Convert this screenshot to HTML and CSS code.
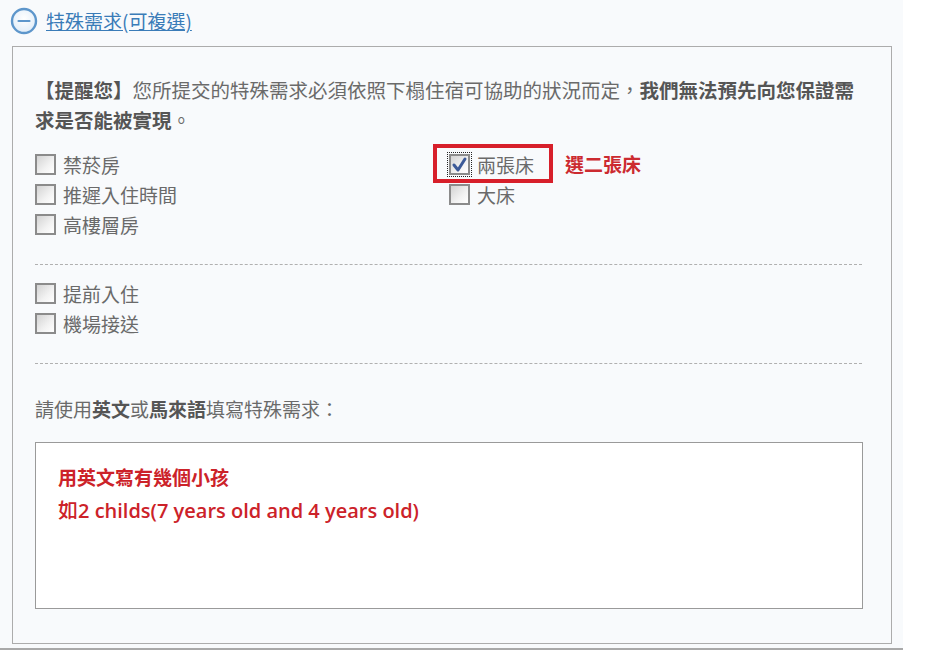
FILE: index.html
```html
<!DOCTYPE html>
<html lang="zh-Hant">
<head>
  <meta charset="UTF-8">
  <title>特殊需求</title>
  <link rel="stylesheet" href="styles.css">
</head>
<body>

<div class="page">
  <div class="toggle">
    <svg class="toggle-icon" width="28" height="28" viewBox="0 0 28 28">
      <defs>
        <radialGradient id="g" cx="50%" cy="40%" r="60%">
          <stop offset="0%" stop-color="#ffffff"/>
          <stop offset="100%" stop-color="#e1edf8"/>
        </radialGradient>
      </defs>
      <circle cx="14" cy="14" r="12" fill="url(#g)" stroke="#5d96cb" stroke-width="2.4"/>
      <line x1="8.5" y1="14" x2="19.5" y2="14" stroke="#5d96cb" stroke-width="2.2" stroke-linecap="round"/>
    </svg>
    <a class="toggle-link" href="#">特殊需求(可複選)</a>
  </div>

  <div class="panel">
    <p class="notice"><b>【提醒您】</b>您所提交的特殊需求必須依照下榻住宿可協助的狀況而定，<b>我們無法預先向您保證需求是否能被實現</b>。</p>

    <!-- room options -->
    <div class="options">
      <div class="col">
        <label class="opt"><span class="box"></span>禁菸房</label>
        <label class="opt"><span class="box"></span>推遲入住時間</label>
        <label class="opt"><span class="box"></span>高樓層房</label>
      </div>
      <div class="col">
        <label class="opt marked">
          <span class="box checked">
            <svg width="17" height="17" viewBox="0 0 17 17"><path d="M3 9 L7 14 L14 3" fill="none" stroke="#3c5a98" stroke-width="3" stroke-linecap="round" stroke-linejoin="round"/></svg>
          </span>兩張床
          <span class="note">選二張床</span>
        </label>
        <label class="opt"><span class="box"></span>大床</label>
      </div>
    </div>

    <hr class="dash">

    <div class="options">
      <div class="col">
        <label class="opt"><span class="box"></span>提前入住</label>
        <label class="opt"><span class="box"></span>機場接送</label>
      </div>
    </div>

    <hr class="dash second">

    <p class="ask">請使用<b>英文</b>或<b>馬來語</b>填寫特殊需求：</p>

    <div class="textbox">
      <p class="red-title">用英文寫有幾個小孩</p>
      <p class="red-line"><span class="cjk">如</span>2 childs(7 years old and 4 years old)</p>
    </div>
  </div>
</div>

</body>
</html>
```

FILE: styles.css
```css
body {
  margin: 0;
  background: #ffffff;
  font-family: "Noto Sans CJK TC", "Noto Sans", sans-serif;
  color: #6a6a6a;
}

.page {
  width: 903px;
  height: 648px;
  background: #f8fafc;
  border-bottom: 2px solid #a9a9a9;
}

/* header toggle */
.toggle {
  height: 46px;
  display: flex;
  align-items: flex-start;
  padding-left: 10px;
}

.toggle-icon {
  margin-top: 7px;
  display: block;
}

.toggle-link {
  margin-left: 8px;
  margin-top: 7px;
  font-size: 19px;
  line-height: 28px;
  color: #3a7cb8;
  text-decoration: underline;
}

/* main panel */
.panel {
  margin-left: 12px;
  width: 880px;
  height: 598px;
  border: 1px solid #acacac;
  padding: 28px 28px 0 22px;
  box-sizing: border-box;
}

.notice {
  margin: 0;
  max-width: 825px;
  font-size: 19.5px;
  line-height: 30px;
}

.notice b, .ask b {
  color: #555;
}

.options {
  display: grid;
  grid-template-columns: 414px 1fr;
  margin-top: 14px;
}

.col {
  display: flex;
  flex-direction: column;
}

.opt {
  display: flex;
  align-items: center;
  height: 30px;
  font-size: 19px;
  position: relative;
}

.box {
  width: 21px;
  height: 21px;
  box-sizing: border-box;
  border: 2px solid #8b8b8b;
  background: linear-gradient(135deg, #d3d3d3 0%, #f2f2f2 60%, #ffffff 100%);
  margin-right: 7px;
  display: flex;
  align-items: center;
  justify-content: center;
}

.box.checked {
  outline: 1px dotted #222;
  outline-offset: 1px;
}

/* red annotation around the checked option */
.marked::before {
  content: "";
  position: absolute;
  left: -16px;
  top: -5px;
  width: 120px;
  height: 39px;
  border: 4px solid #d71f2a;
  box-sizing: border-box;
}

.note {
  position: absolute;
  left: 116px;
  top: 0;
  line-height: 30px;
  font-weight: bold;
  color: #cc2a30;
  white-space: nowrap;
}

.dash {
  border: 0;
  border-top: 1px dashed #b0b0b0;
  margin: 25px 0 0 0;
  width: 827px;
}

.dash + .options {
  margin-top: 13px;
}

.dash.second {
  margin-top: 25px;
}

.ask {
  margin: 30px 0 0 0;
  font-size: 19px;
  line-height: 30px;
}

.textbox {
  margin-top: 18px;
  width: 828px;
  height: 167px;
  box-sizing: border-box;
  background: #fff;
  border: 1px solid #9a9a9a;
  padding: 17px 22px;
  color: #cc2229;
}

.red-title {
  margin: 0;
  font-size: 19px;
  font-weight: bold;
  line-height: 33px;
}

.red-line {
  margin: 0;
  font-family: "Open Sans", "Noto Sans CJK TC", sans-serif;
  font-size: 20px;
  font-weight: 600;
  line-height: 33px;
}

.red-line .cjk {
  font-family: "Noto Sans CJK TC", sans-serif;
  font-weight: 500;
}
```
